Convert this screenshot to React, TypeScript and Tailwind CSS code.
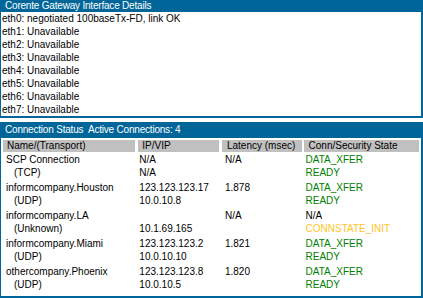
const ifaces = [
  'eth0: negotiated 100baseTx-FD, link OK',
  'eth1: Unavailable',
  'eth2: Unavailable',
  'eth3: Unavailable',
  'eth4: Unavailable',
  'eth5: Unavailable',
  'eth6: Unavailable',
  'eth7: Unavailable',
];

type Conn = {
  name: string;
  transport: string;
  ip: string;
  vip: string;
  latency: string;
  state: string;
  security: string;
};

const conns: Conn[] = [
  { name: 'SCP Connection', transport: '(TCP)', ip: 'N/A', vip: 'N/A', latency: 'N/A', state: 'DATA_XFER', security: 'READY' },
  { name: 'informcompany.Houston', transport: '(UDP)', ip: '123.123.123.17', vip: '10.0.10.8', latency: '1.878', state: 'DATA_XFER', security: 'READY' },
  { name: 'informcompany.LA', transport: '(Unknown)', ip: '', vip: '10.1.69.165', latency: 'N/A', state: 'N/A', security: 'CONNSTATE_INIT' },
  { name: 'informcompany.Miami', transport: '(UDP)', ip: '123.123.123.2', vip: '10.0.10.10', latency: '1.821', state: 'DATA_XFER', security: 'READY' },
  { name: 'othercompany.Phoenix', transport: '(UDP)', ip: '123.123.123.8', vip: '10.0.10.5', latency: '1.820', state: 'DATA_XFER', security: 'READY' },
];

const stateColor = (s: string) => {
  if (s === 'DATA_XFER' || s === 'READY') return 'text-[#008000]';
  if (s === 'CONNSTATE_INIT') return 'text-[#ffc425]';
  return 'text-black';
};

export default function App() {
  return (
    <div
      className="w-[423px] h-[298px] bg-white text-[10px] text-black overflow-hidden"
      style={{ fontFamily: '"Liberation Sans", Arial, sans-serif' }}
    >
      {/* Interface details */}
      <div className="h-[118px] border-l border-r-2 border-b-2 border-[#006699]">
        <div className="h-[12px] bg-[#006699] text-white leading-[12px] pl-[4px] tracking-[-0.2px]">
          Corente Gateway Interface Details
        </div>
        {ifaces.map((t) => (
          <div key={t} className="h-[13px] leading-[13px] pl-[1px]">
            {t}
          </div>
        ))}
      </div>

      {/* Connection status */}
      <div className="mt-[4px] h-[176px] border-l border-r-2 border-b-2 border-[#006699]">
        <div className="h-[16px] bg-[#006699] text-white leading-[16px] pl-[4px] whitespace-pre tracking-[-0.2px]">
          {'Connection Status  Active Connections: 4'}
        </div>
        <div className="flex mt-[2px] px-[2px] h-[12px] leading-[12px]">
          <div className="w-[133px] bg-[#c0c0c0] pl-[4px]">Name/(Transport)</div>
          <div className="w-[81px] ml-[3px] bg-[#c0c0c0] pl-[4px]">IP/VIP</div>
          <div className="w-[80px] ml-[3px] bg-[#c0c0c0] pl-[5px]">Latency (msec)</div>
          <div className="w-[116px] ml-[2px] bg-[#c0c0c0] pl-[5px]">Conn/Security State</div>
        </div>
        <div className="mt-[1px]">
          {conns.map((c) => (
            <div key={c.name} className="flex px-[2px] h-[28px] pt-[1px] leading-[12.5px]">
              <div className="w-[133px] pl-[3px]">
                <div>{c.name}</div>
                <div className="pl-[8px]">{c.transport}</div>
              </div>
              <div className="w-[81px] ml-[3px] pl-[1px]">
                <div className="h-[12.5px]">{c.ip}</div>
                <div>{c.vip}</div>
              </div>
              <div className="w-[80px] ml-[3px] pl-[3px]">{c.latency}</div>
              <div className="w-[116px] ml-[2px] pl-[2px]">
                <div className={stateColor(c.state)}>{c.state}</div>
                <div className={stateColor(c.security)}>{c.security}</div>
              </div>
            </div>
          ))}
        </div>
      </div>
    </div>
  );
}
